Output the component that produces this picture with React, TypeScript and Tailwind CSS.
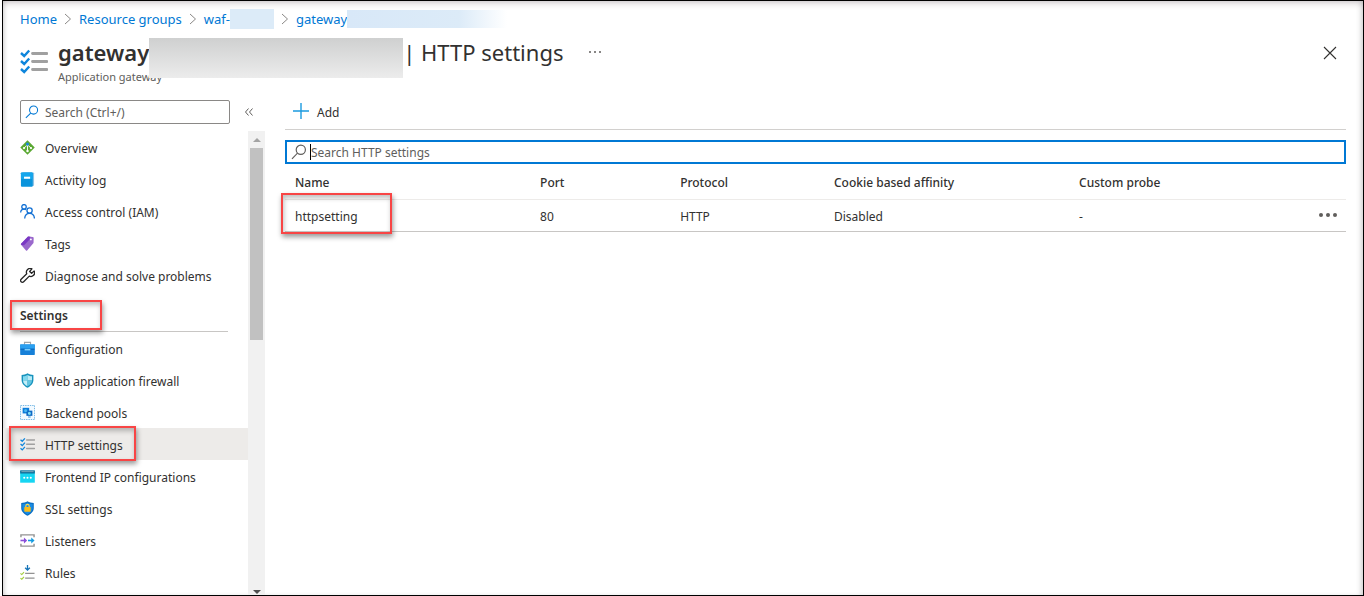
import React from "react";

type IconProps = { className?: string };

function ChecklistIcon({ className = "size-[15px]" }: IconProps) {
  return (
    <svg viewBox="0 0 28 28" className={className} fill="none" aria-hidden="true">
      <path d="M12.500 5.500H27M12.500 13.500H27M12.500 21.500H27" stroke="#a0a0a0" strokeWidth="2.800" strokeLinecap="round" />
      <path d="M1 5l3.200 3 5-5.500M1 13l3.200 3 5-5.500M1 21l3.200 3 5-5.500" stroke="#0f86dc" strokeWidth="2.400" />
    </svg>
  );
}

function OverviewIcon() {
  return (
    <svg viewBox="0 0 16 16" className="size-[15px]" aria-hidden="true">
      <path d="M8 .3 15.700 8 8 15.700.3 8z" fill="#5aa832" />
      <path d="M8 4v8M7.500 5.500 4.500 8.500M8.500 5.500l3 3" stroke="#fff" strokeWidth="1" fill="none" />
      <circle cx="8" cy="4.300" r="1.700" fill="#1c86d8" />
      <circle cx="4.300" cy="8.600" r="1.200" fill="#fff" />
      <circle cx="11.700" cy="8.600" r="1.200" fill="#fff" />
      <circle cx="8" cy="11.800" r="1.300" fill="#fff" />
    </svg>
  );
}

function LogIcon() {
  return (
    <svg viewBox="0 0 16 16" className="size-[15px]" aria-hidden="true">
      <rect x="3" y=".4" width="12" height="14.400" rx="1" fill="#8fc3e4" />
      <rect x="1" y=".4" width="12.600" height="15.200" rx="1" fill="#0a94dc" />
      <rect x="1" y=".4" width="12.600" height="7" rx="1" fill="#14a6ec" />
      <rect x="4.300" y="5" width="6.500" height="2.200" fill="#fff" />
    </svg>
  );
}

function PeopleIcon() {
  return (
    <svg viewBox="0 0 16 16" className="size-[15px]" fill="none" stroke="#1471d4" strokeWidth="1.400" aria-hidden="true">
      <circle cx="4.300" cy="3" r="2.400" />
      <circle cx="10.200" cy="7" r="2.800" />
      <path d="M.7 9C.8 6.800 2.400 5.500 4.400 5.500c.8 0 1.400.2 2 .5M5 15.500c.2-3.400 2.300-5.500 5.200-5.500s5 2.100 5.200 5.500" />
    </svg>
  );
}

function TagIcon() {
  return (
    <svg viewBox="0 0 16 16" className="size-[15px]" aria-hidden="true">
      <path d="M8.600.6 13.600 1q1 .1 1 1.100l-.2 5.400L7.600 15.400q-.6.6-1.200 0L1.100 9.200q-.4-.5 0-1z" fill="#9a68cc" />
      <path d="M8.600.6 11 .8l-1.300 3.400-5.400 5.700-3.200-.7q-.4-.5 0-1z" fill="#7a38c4" />
      <circle cx="11.600" cy="3.600" r="1" fill="#fff" />
    </svg>
  );
}

function WrenchIcon() {
  return (
    <svg viewBox="0 0 16 16" className="size-[15px]" fill="none" stroke="#252525" strokeWidth="1.400" strokeLinejoin="round" aria-hidden="true">
      <path d="M12.700.9a4 4 0 0 0-5.500 5.200L1.200 12a1.800 1.800 0 0 0 2.700 2.700l6-6a4 4 0 0 0 5.200-5.500l-2.700 2.500-2.100-2z" />
    </svg>
  );
}

function ToolboxIcon() {
  return (
    <svg viewBox="0 0 16 16" className="size-[15px]" aria-hidden="true">
      <path d="M4.800 4V1.500h6.400V4" stroke="#a0a5a8" strokeWidth="1.200" fill="none" />
      <rect x=".2" y="3.600" width="15.600" height="11.200" rx=".6" fill="#1680d8" />
      <rect x=".2" y="3.600" width="15.600" height="4.400" fill="#2ba0f0" />
      <path d="M.5 8.800H5M11 8.800h4.500" stroke="#0a62b4" fill="none" />
      <path d="M5 9.300h6" stroke="#7cccf8" strokeWidth="1.600" />
    </svg>
  );
}

function ShieldIcon() {
  return (
    <svg viewBox="0 0 16 16" className="size-[15px]" aria-hidden="true">
      <path d="M8 .3C10 1.700 12 2 14.300 2v5.500c0 4-3.100 6.600-6.300 8.300-3.200-1.700-6.300-4.300-6.300-8.300V2C4 2 6 1.700 8 .3z" fill="#1793bd" />
      <path d="M8 2v6H3.200V3.400C5 3.300 6.600 3 8 2z" fill="#80d8ee" />
      <path d="M8 2c1.400 1 3 1.300 4.800 1.400V8H8z" fill="#b8eaf6" />
      <path d="M3.200 8H8v6.200C5.500 12.900 3.400 11 3.200 8z" fill="#c4eef8" />
      <path d="M8 8h4.800c-.2 3-2.300 4.900-4.800 6.200z" fill="#62c6e2" />
    </svg>
  );
}

function PoolIcon() {
  return (
    <svg viewBox="0 0 16 16" className="size-[15px]" aria-hidden="true">
      <rect x=".5" y=".5" width="15" height="15" fill="#f3faff" stroke="#6bb2e2" strokeDasharray="1.500 1" />
      <rect x="2.800" y="3" width="7" height="6" fill="#0d7cda" />
      <rect x="6.800" y="6" width="6.400" height="5.600" fill="#0f69c4" />
      <path d="M6 4.200 7.600 5.100v1.800L6 7.800l-1.600-.9V5.100z" fill="#48b8f0" />
      <path d="M10 7.200l1.500.9v1.700l-1.500.9-1.500-.9V8.100z" fill="#7be0f8" />
      <path d="M8.600 12.800h2.800" stroke="#2b91dd" />
    </svg>
  );
}

function FrontendIcon() {
  return (
    <svg viewBox="0 0 16 16" className="size-[15px]" aria-hidden="true">
      <rect x=".2" y="2" width="15.600" height="12.600" fill="#16d5f2" />
      <rect x=".2" y="1.400" width="15.600" height="3.400" fill="#126f9a" />
      <path d="M1.500 2.800h13" stroke="#80a9bb" />
      <circle cx="4.500" cy="9.300" r="1.100" fill="#fff" />
      <circle cx="8" cy="9.300" r="1.100" fill="#fff" />
      <circle cx="11.500" cy="9.300" r="1.100" fill="#fff" />
    </svg>
  );
}

function LockShieldIcon() {
  return (
    <svg viewBox="0 0 16 16" className="size-[15px]" aria-hidden="true">
      <path d="M8 .3c2 1.500 4.200 1.700 6.700 1.700v5.400c0 4.200-3.600 6.800-6.700 8.400-3.100-1.600-6.700-4.200-6.700-8.400V2C3.800 2 6 1.800 8 .3z" fill="#0b6fc4" />
      <path d="M8 1.800c1.600 1.100 3.200 1.400 5.500 1.500v4.200c0 3.300-3 5.400-5.500 6.800-2.500-1.400-5.500-3.500-5.500-6.800V3.300C4.800 3.200 6.400 2.900 8 1.800z" fill="#198ce4" />
      <path d="M6.200 7V5.400a1.800 1.800 0 0 1 3.600 0V7" fill="none" stroke="#ffda4a" strokeWidth="1.200" />
      <rect x="4.600" y="6.300" width="6.800" height="5.200" rx=".5" fill="#fbbc19" />
    </svg>
  );
}

function ListenerIcon() {
  return (
    <svg viewBox="0 0 16 16" className="size-[15px]" fill="none" aria-hidden="true">
      <path d="M1 4.500V2h14v2.500M1 11.500V14h14v-2.500" stroke="#929292" strokeWidth="1.500" />
      <path d="M.5 8h5" stroke="#8a4fd8" strokeWidth="1.700" />
      <path d="M4.200 4.800 7.600 8l-3.400 3.200z" fill="#8a4fd8" />
      <path d="M8.500 8H13" stroke="#139be0" strokeWidth="1.700" />
      <path d="M12 4.800 15.500 8 12 11.200z" fill="#139be0" />
    </svg>
  );
}

function RulesIcon() {
  return (
    <svg viewBox="0 0 16 16" className="size-[15px]" fill="none" aria-hidden="true">
      <path d="M8 0v5M5.500 3 8 5.500 10.500 3" stroke="#1674b8" strokeWidth="1.400" />
      <path d="M5.500 9h10M5.500 14h10" stroke="#929292" strokeWidth="1.300" />
      <path d="m.5 9 1.400 1.200L4.300 7.600M.5 14l1.400 1.200 2.400-2.600" stroke="#a4ce3c" strokeWidth="1.200" />
    </svg>
  );
}

function SearchIcon({ className }: IconProps) {
  return (
    <svg viewBox="0 0 16 16" className={className} fill="none" stroke="currentColor" strokeWidth="1.200" aria-hidden="true">
      <circle cx="9.800" cy="5.800" r="4.600" />
      <path d="M6.500 9.200 1 14.800" />
    </svg>
  );
}

function Chevron() {
  return (
    <svg viewBox="0 0 8 12" className="h-3 w-2 shrink-0" fill="none" stroke="#8a8886" aria-hidden="true">
      <path d="m1 1 5.500 5L1 11" />
    </svg>
  );
}

function Highlight({ className }: { className: string }) {
  return (
    <span
      aria-hidden="true"
      className={`pointer-events-none absolute border-2 border-[#f84545] shadow-[1px_3px_5px_rgba(0,0,0,0.4),inset_1px_3px_5px_rgba(0,0,0,0.25)] ${className}`}
    />
  );
}

type Item = { label: string; icon: React.ReactNode; active?: boolean };

const general: Item[] = [
  { label: "Overview", icon: <OverviewIcon /> },
  { label: "Activity log", icon: <LogIcon /> },
  { label: "Access control (IAM)", icon: <PeopleIcon /> },
  { label: "Tags", icon: <TagIcon /> },
  { label: "Diagnose and solve problems", icon: <WrenchIcon /> },
];

const settings: Item[] = [
  { label: "Configuration", icon: <ToolboxIcon /> },
  { label: "Web application firewall", icon: <ShieldIcon /> },
  { label: "Backend pools", icon: <PoolIcon /> },
  { label: "HTTP settings", icon: <ChecklistIcon />, active: true },
  { label: "Frontend IP configurations", icon: <FrontendIcon /> },
  { label: "SSL settings", icon: <LockShieldIcon /> },
  { label: "Listeners", icon: <ListenerIcon /> },
  { label: "Rules", icon: <RulesIcon /> },
];

function NavList({ items }: { items: Item[] }) {
  return (
    <ul>
      {items.map((item) => (
        <li key={item.label} className="relative">
          <a
            href="#"
            aria-current={item.active ? "page" : undefined}
            className={`flex h-8 items-center gap-2.5 pl-[17px] whitespace-nowrap ${item.active ? "bg-[#edebe9]" : ""}`}
          >
            {item.icon}
            <span className="pt-1">{item.label}</span>
          </a>
          {item.active && <Highlight className="-top-0.5 left-1.5 z-10 h-[35px] w-[127px]" />}
        </li>
      ))}
    </ul>
  );
}

export default function App() {
  return (
    <div className="h-screen bg-white pl-0.5 font-['Noto_Sans','Open_Sans',sans-serif] text-[12px] leading-4 text-[#323130]">
      <div className="flex h-full flex-col overflow-hidden border border-black shadow-[inset_0_5px_6px_-2px_rgba(70,50,60,0.2),inset_-4px_0_6px_-3px_rgba(0,0,0,0.2),inset_4px_0_5px_-3px_rgba(0,0,0,0.15)]">
        <nav aria-label="Breadcrumb" className="flex h-[35px] shrink-0 items-center gap-[7px] pl-[17px] text-[13px] text-[#0078d4]">
          <a href="#">Home</a>
          <Chevron />
          <a href="#">Resource groups</a>
          <Chevron />
          <a href="#" className="flex items-center">
            waf-
            <span className="h-5 w-11 bg-[#dcebf8]" />
          </a>
          <Chevron />
          <a href="#" className="flex items-center">
            gateway
            <span className="h-[18px] w-[160px] bg-linear-to-r from-[#d8e8f8] via-[#dcebf8] via-70% to-white" />
          </a>
        </nav>

        <header className="flex h-16 shrink-0 pr-[21px] pl-[17px]">
          <ChecklistIcon className="mt-3 size-7 shrink-0" />
          <div className="ml-2.5">
            <div className="flex h-8 items-center">
              <h1 className="flex items-center text-[22px] leading-8 whitespace-nowrap">
                <span className="font-semibold">gateway</span>
                <span className="relative h-8 w-[254px]">
                  <span className="absolute top-0.5 left-0 h-10 w-full bg-linear-to-b from-[#cfd0d0] to-[#ececec]" />
                </span>
                <span>| HTTP settings</span>
              </h1>
              <button type="button" aria-label="More" className="ml-6 flex gap-[3px] p-0.5">
                <span className="size-0.5 rounded-full bg-[#605e5c]" />
                <span className="size-0.5 rounded-full bg-[#605e5c]" />
                <span className="size-0.5 rounded-full bg-[#605e5c]" />
              </button>
            </div>
            <p className="pt-px text-[11px] text-[#605e5c]">Application gateway</p>
          </div>
          <button type="button" aria-label="Close" className="mt-[5px] ml-auto size-6">
            <svg viewBox="0 0 24 24" className="size-6" stroke="#323130" strokeWidth="1.100">
              <path d="m6 6 12 12M18 6 6 18" />
            </svg>
          </button>
        </header>

        <div className="flex min-h-0 flex-1">
          <aside className="flex w-[262px] shrink-0 flex-col">
            <div className="flex h-[31px] shrink-0 items-start pl-[17px]">
              <label className="flex h-6 w-[210px] items-center gap-1.5 rounded-[2px] border border-[#8a8886] px-1 text-[#0078d4]">
                <SearchIcon className="size-3.5 shrink-0" />
                <input
                  type="search"
                  aria-label="Search menu"
                  placeholder="Search (Ctrl+/)"
                  className="w-full min-w-0 pt-px text-[#323130] outline-none placeholder:text-[#605e5c]"
                />
              </label>
              <button type="button" aria-label="Collapse menu" className="ml-3.5 flex h-6 w-3 items-center">
                <svg viewBox="0 0 10 10" className="size-2.5" fill="none" stroke="#605e5c">
                  <path d="M4.500 1.500 1.500 5l3 3.500M8.500 1.500 5.500 5l3 3.500" />
                </svg>
              </button>
            </div>
            <div className="flex min-h-0 flex-1">
              <nav aria-label="Menu" className="min-w-0 flex-1">
                <NavList items={general} />
                <div className="relative mr-5 ml-[17px] flex h-[41px] items-end border-b border-[#c8c6c4] pb-[7px]">
                  <h2 className="font-semibold">Settings</h2>
                  <Highlight className="top-[9px] -left-2.5 h-[30px] w-[92px]" />
                </div>
                <NavList items={settings} />
              </nav>
              <div aria-hidden="true" className="flex w-[17px] flex-col items-center bg-[#f1f1f1]">
                <svg viewBox="0 0 8 17" className="h-[17px] w-2 shrink-0" fill="#a3a3a3">
                  <path d="M0 11h8L4 7z" />
                </svg>
                <div className="h-48 w-[13px] shrink-0 bg-[#c1c1c1]" />
                <svg viewBox="0 0 8 10" className="mt-auto h-2.5 w-2 shrink-0" fill="#505050">
                  <path d="M0 5h8L4 9z" />
                </svg>
              </div>
            </div>
          </aside>

          <main className="mr-[17px] ml-5 min-w-0 flex-1">
            <div className="flex h-[30px] border-b border-[#d2d0ce]">
              <button type="button" className="flex h-6 items-center gap-2 pl-2">
                <svg viewBox="0 0 16 16" className="-mt-0.5 size-4" stroke="#1b9be0" strokeWidth="1.400">
                  <path d="M8 0v16M0 8h16" />
                </svg>
                <span className="pt-0.5">Add</span>
              </button>
            </div>
            <label className="mt-2.5 flex h-6 items-center border-2 border-[#0078d4] pl-1">
              <SearchIcon className="size-4 shrink-0 text-[#605e5c]" />
              <span aria-hidden="true" className="ml-[3px] h-4 w-px bg-black" />
              <input
                type="search"
                aria-label="Search HTTP settings"
                placeholder="Search HTTP settings"
                className="w-full min-w-0 pt-0.5 outline-none placeholder:text-[#605e5c]"
              />
            </label>
            <table className="w-full table-fixed border-collapse text-left">
              <colgroup>
                <col className="w-[23.1%]" />
                <col className="w-[13.2%]" />
                <col className="w-[14.5%]" />
                <col className="w-[23.1%]" />
                <col />
                <col className="w-10" />
              </colgroup>
              <thead>
                <tr className="h-[35px] border-b border-[#edebe9]">
                  <th className="pt-1 pl-2.5 font-medium">Name</th>
                  <th className="pt-1 pl-2.5 font-medium">Port</th>
                  <th className="pt-1 pl-2.5 font-medium">Protocol</th>
                  <th className="pt-1 pl-2.5 font-medium">Cookie based affinity</th>
                  <th className="pt-1 pl-2.5 font-medium">Custom probe</th>
                  <th aria-label="Actions" />
                </tr>
              </thead>
              <tbody>
                <tr className="h-8 border-b border-[#c8c6c4]">
                  <td className="relative pt-1 pl-2.5">
                    <a href="#">httpsetting</a>
                    <Highlight className="-top-[7px] -left-1 h-[41px] w-[111px]" />
                  </td>
                  <td className="pt-1 pl-2.5">80</td>
                  <td className="pt-1 pl-2.5">HTTP</td>
                  <td className="pt-1 pl-2.5">Disabled</td>
                  <td className="pt-1 pl-2.5">-</td>
                  <td>
                    <button type="button" aria-label="Row actions" className="ml-auto flex gap-[3px] pr-[9px]">
                      <span className="size-1 rounded-full bg-[#605e5c]" />
                      <span className="size-1 rounded-full bg-[#605e5c]" />
                      <span className="size-1 rounded-full bg-[#605e5c]" />
                    </button>
                  </td>
                </tr>
              </tbody>
            </table>
          </main>
        </div>
      </div>
    </div>
  );
}
